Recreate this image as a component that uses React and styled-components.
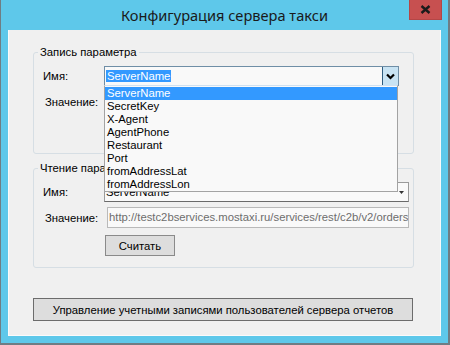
import React from "react";
import styled, { createGlobalStyle } from "styled-components";

const GlobalStyle = createGlobalStyle`
  html, body {
    margin: 0;
    padding: 0;
    background: #ffffff;
  }
  body {
    font-family: "Liberation Sans", Arial, sans-serif;
    font-size: 11.3px;
    color: #000;
  }
`;

const Frame = styled.div`
  box-sizing: border-box;
  width: 450px;
  height: 345px;
  display: flex;
  flex-direction: column;
  background: #5ec8ea;
  border-left: 1px solid #6f7d84;
  border-right: 2px solid #6f7d84;
  border-bottom: 2px solid #6f7d84;
`;

const TitleBar = styled.div`
  height: 30px;
  display: grid;
  grid-template-columns: 1fr auto 1fr;
  align-items: start;
`;

const Title = styled.div`
  grid-column: 2;
  line-height: 30px;
  font-family: "Noto Sans", "Open Sans", sans-serif;
  font-size: 14.6px;
  color: #1a1a1a;
  white-space: nowrap;
`;

const CloseButton = styled.div`
  grid-column: 3;
  justify-self: end;
  margin-right: 6px;
  width: 33px;
  height: 20px;
  box-sizing: border-box;
  background: #c75050;
  border: 1px solid #b44646;
  border-top: none;
  display: flex;
  align-items: center;
  justify-content: center;
`;

const Client = styled.div`
  flex: 1;
  box-sizing: border-box;
  margin: 0 7px 7px;
  background: #f0f0f0;
  border: 1px solid #fbfbfb;
  border-top: none;
  padding: 15px 26px 0 24px;
  display: flex;
  flex-direction: column;
`;

const Group = styled.fieldset`
  box-sizing: border-box;
  margin: 0 0 ${({ $gap }) => $gap || 0}px;
  padding: 0;
  min-width: 0;
  height: ${({ $height }) => $height}px;
  border: 1px solid #d6dee4;
  border-radius: 3px;
`;

const Legend = styled.legend`
  margin-left: 4px;
  padding: 0 2px;
  line-height: 14px;
  font-size: 11.3px;
`;

const GroupBody = styled.div`
  display: grid;
  grid-template-columns: 61px 1fr;
  grid-auto-rows: auto;
  align-items: center;
  padding: 7px 14px 0 9px;
`;

const Label = styled.div`
  grid-column: 1;
  margin-left: ${({ $indent }) => $indent || 0}px;
  margin-top: ${({ $top }) => $top || 0}px;
  white-space: nowrap;
`;

const Cell = styled.div`
  grid-column: 2;
  margin-top: ${({ $top }) => $top || 0}px;
  margin-left: ${({ $indent }) => $indent || 0}px;
  min-height: ${({ $h }) => $h || 0}px;
`;

const ComboBox = styled.div`
  position: relative;
  box-sizing: border-box;
  height: 20px;
  display: flex;
  align-items: center;
  background: #f9f9f9;
  border: 1px solid ${({ $focused }) => ($focused ? "#6f8ea6" : "#9a9a9a")};
  border-bottom-color: ${({ $focused }) => ($focused ? "#6f8ea6" : "#6a6a6a")};
`;

const ComboText = styled.div`
  flex: 1;
  padding-left: 1px;
  line-height: 14px;
  white-space: nowrap;
  overflow: hidden;
`;

const Selection = styled.span`
  background: #3399ff;
  color: #fff;
  padding: 0 1px 0 1px;
`;

const DropButton = styled.div`
  box-sizing: border-box;
  width: 16px;
  align-self: stretch;
  background: #c8e3f3;
  border-left: 1px solid #2f5d80;
  display: flex;
  align-items: center;
  justify-content: center;
`;

const SmallArrow = styled.div`
  width: 14px;
  display: flex;
  align-items: center;
  justify-content: center;
`;

const DropList = styled.ul`
  position: absolute;
  top: 100%;
  left: -1px;
  width: 294px;
  box-sizing: border-box;
  margin: 0;
  padding: 1px 0 0;
  list-style: none;
  background: #f9f9f9;
  border: 1px solid #a3a3a3;
  border-top-color: #cfe1f1;
  z-index: 10;
`;

const DropItem = styled.li`
  height: 13px;
  line-height: 13px;
  padding-left: 2px;
  white-space: nowrap;
  background: ${({ $active }) => ($active ? "#3399ff" : "transparent")};
  color: ${({ $active }) => ($active ? "#ffffff" : "#000000")};
`;

const TextBox = styled.div`
  box-sizing: border-box;
  height: 21px;
  line-height: 19px;
  padding-left: 1px;
  background: #f9f9f9;
  border: 1px solid #b9b9b9;
  color: #6d6d6d;
  white-space: nowrap;
  overflow: hidden;
`;

const Button = styled.button`
  box-sizing: border-box;
  width: ${({ $width }) => ($width ? `${$width}px` : "auto")};
  height: ${({ $height }) => $height}px;
  margin: 0;
  padding: 0;
  background: #dddddd;
  border: 1px solid ${({ $dark }) => ($dark ? "#6c6c6c" : "#8a8a8a")};
  font-family: "Liberation Sans", Arial, sans-serif;
  font-size: 11.3px;
  color: #000;
`;

const WideButton = styled(Button)`
  margin: 30px 1px 0 0;
`;

const params = [
  "ServerName",
  "SecretKey",
  "X-Agent",
  "AgentPhone",
  "Restaurant",
  "Port",
  "fromAddressLat",
  "fromAddressLon",
];

function Chevron() {
  return (
    <svg width="9" height="7" viewBox="0 0 9 7">
      <path d="M1 1.5 L4.5 5 L8 1.5" fill="none" stroke="#000" strokeWidth="2.2" />
    </svg>
  );
}

function CloseGlyph() {
  return (
    <svg width="11" height="9" viewBox="0 0 11 9">
      <path d="M1.5 1 L9.5 8 M9.5 1 L1.5 8" stroke="#1b1b1b" strokeWidth="2.4" />
    </svg>
  );
}

export default function App() {
  return (
    <>
      <GlobalStyle />
      <Frame>
        <TitleBar>
          <Title>Конфигурация сервера такси</Title>
          <CloseButton>
            <CloseGlyph />
          </CloseButton>
        </TitleBar>
        <Client>
          <Group $height={109} $gap={7}>
            <Legend>Запись параметра</Legend>
            <GroupBody>
              <Label>Имя:</Label>
              <Cell>
                <ComboBox $focused>
                  <ComboText>
                    <Selection>ServerName</Selection>
                  </ComboText>
                  <DropButton>
                    <Chevron />
                  </DropButton>
                  <DropList>
                    {params.map((p, i) => (
                      <DropItem key={p} $active={i === 0}>
                        {p}
                      </DropItem>
                    ))}
                  </DropList>
                </ComboBox>
              </Cell>
              <Label $indent={2} $top={5}>
                Значение:
              </Label>
              <Cell $top={5} $h={21} />
            </GroupBody>
          </Group>

          <Group $height={107}>
            <Legend>Чтение параметра</Legend>
            <GroupBody>
              <Label>Имя:</Label>
              <Cell>
                <ComboBox>
                  <ComboText>ServerName</ComboText>
                  <SmallArrow>
                    <svg width="5" height="3" viewBox="0 0 5 3">
                      <path d="M0 0 H5 L2.5 3 Z" fill="#333" />
                    </svg>
                  </SmallArrow>
                </ComboBox>
              </Cell>
              <Label $indent={2} $top={5}>
                Значение:
              </Label>
              <Cell $top={5} $indent={3}>
                <TextBox>http://testc2bservices.mostaxi.ru/services/rest/c2b/v2/orders</TextBox>
              </Cell>
              <Cell $top={7} $indent={1}>
                <Button $width={70} $height={21}>
                  Считать
                </Button>
              </Cell>
            </GroupBody>
          </Group>

          <WideButton $height={23} $dark>
            Управление учетными записями пользователей сервера отчетов
          </WideButton>
        </Client>
      </Frame>
    </>
  );
}
